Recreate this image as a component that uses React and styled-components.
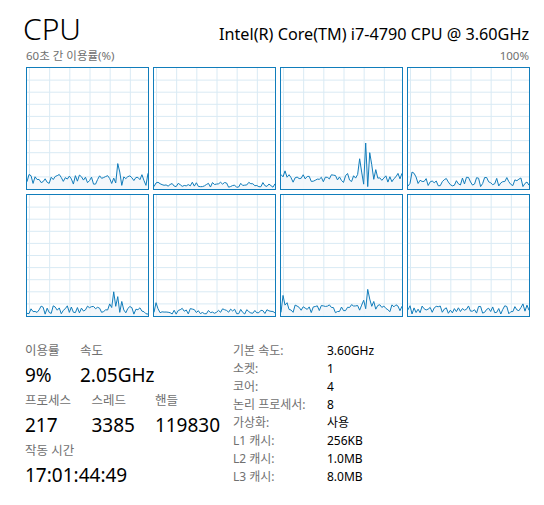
import React from 'react'
import styled, { createGlobalStyle } from 'styled-components'

const GlobalStyle = createGlobalStyle`
  body {
    margin: 0;
    background: #ffffff;
    font-family: "Noto Sans", "Noto Sans CJK KR", sans-serif;
    color: #000000;
  }
`

const Page = styled.div`
  width: 544px;
  height: 505px;
  box-sizing: border-box;
  padding: 12px 15px 0 26px;
  display: flex;
  flex-direction: column;
`

const Header = styled.div`
  display: flex;
  justify-content: space-between;
  align-items: flex-end;
  height: 34px;
`

const Title = styled.div`
  font-size: 30px;
  font-weight: 300;
  line-height: 34px;
  margin-left: -3px;
`

const Model = styled.div`
  font-size: 16.2px;
  line-height: 20px;
  margin-bottom: 2px;
`

const Caption = styled.div`
  display: flex;
  justify-content: space-between;
  font-size: 11.5px;
  line-height: 14px;
  color: #707070;
  margin-top: 3px;
  height: 18px;
`

const GraphGrid = styled.div`
  display: grid;
  grid-template-columns: repeat(4, 123px);
  grid-template-rows: repeat(2, 123px);
  gap: 4px;
`

const GraphBox = styled.div`
  box-sizing: border-box;
  border: 1px solid #117dbb;
  background: #ffffff;
  overflow: hidden;
  svg {
    display: block;
  }
`

const Stats = styled.div`
  display: flex;
  margin-top: 25px;
  margin-left: -1px;
`

const LeftStats = styled.div`
  display: flex;
  flex-direction: column;
  width: 208px;
  padding-top: 1px;
`

const StatRow = styled.div`
  display: flex;
  margin-bottom: 3px;
`

const Stat = styled.div`
  width: ${p => p.w}px;
  display: flex;
  flex-direction: column;
`

const Label = styled.div`
  font-size: 12.5px;
  line-height: 16px;
  color: #707070;
  white-space: nowrap;
`

const Value = styled.div`
  font-size: 19px;
  line-height: 30px;
  margin-top: 1px;
  white-space: nowrap;
`

const Specs = styled.div`
  display: grid;
  grid-template-columns: 94px auto;
  grid-auto-rows: 18px;
  font-size: 12px;
  line-height: 18px;
`

const SpecLabel = styled.div`
  color: #707070;
  white-space: nowrap;
`

const SpecValue = styled.div`
  color: #000000;
`

function rng(seed) {
  let s = seed
  return () => {
    s |= 0
    s = (s + 0x6d2b79f5) | 0
    let t = Math.imul(s ^ (s >>> 15), 1 | s)
    t = (t + Math.imul(t ^ (t >>> 7), 61 | t)) ^ t
    return ((t ^ (t >>> 14)) >>> 0) / 4294967296
  }
}

function makeData(seed, base, noise, spikes) {
  const r = rng(seed)
  const pts = []
  for (let i = 0; i <= 60; i++) {
    let v = base + (r() - 0.5) * 2 * noise
    if (spikes[i] !== undefined) v = spikes[i]
    pts.push(Math.max(0.5, v))
  }
  return pts
}

const graphs = [
  makeData(3, 8, 4, { 0: 6, 1: 12, 2: 11, 16: 12, 40: 11, 43: 9, 44: 5, 45: 21, 46: 14, 47: 3, 48: 10, 58: 7, 59: 3, 60: 13 }),
  makeData(7, 3.5, 2.2, { 0: 2, 1: 5 }),
  makeData(11, 9, 4, { 0: 12, 1: 10, 2: 15, 37: 9, 38: 12, 39: 25, 40: 14, 41: 4, 42: 38, 43: 2, 44: 30, 45: 20, 46: 8, 47: 16, 55: 6, 60: 13 }),
  makeData(19, 6, 4, { 2: 14, 3: 13 }),
  makeData(23, 5, 3.5, { 40: 5, 41: 10, 42: 7, 43: 20, 44: 8, 45: 16, 46: 3, 47: 12, 48: 5 }),
  makeData(29, 4, 2.5, { 0: 3, 1: 11, 2: 6 }),
  makeData(31, 6, 3.5, { 0: 3, 1: 17, 2: 9, 3: 11, 40: 9, 41: 13, 42: 6, 43: 22, 44: 14, 45: 8, 46: 12 }),
  makeData(37, 5, 3.5, { 57: 10, 58: 4, 59: 9 }),
]

const W = 121
const H = 121

function Graph({ data }) {
  const step = W / 60
  const line = data.map((v, i) => `${(i * step).toFixed(2)},${(H - (v / 100) * H).toFixed(2)}`).join(' ')
  const area = `0,${H} ${line} ${W},${H}`
  const vLines = []
  for (let x = 2.5; x < W; x += W / 6) vLines.push(x)
  const hLines = []
  for (let k = 1; k < 10; k++) hLines.push((k * H) / 10)
  return (
    <GraphBox>
      <svg width={W} height={H} viewBox={`0 0 ${W} ${H}`}>
        {vLines.map(x => (
          <line key={'v' + x} x1={x} x2={x} y1={0} y2={H} stroke="#d9eaf4" strokeWidth="1" />
        ))}
        {hLines.map(y => (
          <line key={'h' + y} x1={0} x2={W} y1={y} y2={y} stroke="#d9eaf4" strokeWidth="1" />
        ))}
        <polygon points={area} fill="#f1f6fa" fillOpacity="0.85" />
        <polyline points={line} fill="none" stroke="#117dbb" strokeWidth="1" strokeLinejoin="round" />
      </svg>
    </GraphBox>
  )
}

const specs = [
  ['기본 속도:', '3.60GHz'],
  ['소켓:', '1'],
  ['코어:', '4'],
  ['논리 프로세서:', '8'],
  ['가상화:', '사용'],
  ['L1 캐시:', '256KB'],
  ['L2 캐시:', '1.0MB'],
  ['L3 캐시:', '8.0MB'],
]

export default function App() {
  return (
    <Page>
      <GlobalStyle />
      <Header>
        <Title>CPU</Title>
        <Model>Intel(R) Core(TM) i7-4790 CPU @ 3.60GHz</Model>
      </Header>
      <Caption>
        <span>60초 간 이용률(%)</span>
        <span>100%</span>
      </Caption>
      <GraphGrid>
        {graphs.map((d, i) => (
          <Graph key={i} data={d} />
        ))}
      </GraphGrid>
      <Stats>
        <LeftStats>
          <StatRow>
            <Stat w={55}>
              <Label>이용률</Label>
              <Value>9%</Value>
            </Stat>
            <Stat w={100}>
              <Label>속도</Label>
              <Value>2.05GHz</Value>
            </Stat>
          </StatRow>
          <StatRow>
            <Stat w={68}>
              <Label>프로세스</Label>
              <Value>217</Value>
            </Stat>
            <Stat w={65}>
              <Label>스레드</Label>
              <Value>3385</Value>
            </Stat>
            <Stat w={80}>
              <Label>핸들</Label>
              <Value>119830</Value>
            </Stat>
          </StatRow>
          <StatRow>
            <Stat w={150}>
              <Label>작동 시간</Label>
              <Value>17:01:44:49</Value>
            </Stat>
          </StatRow>
        </LeftStats>
        <Specs>
          {specs.map(([k, v]) => (
            <React.Fragment key={k}>
              <SpecLabel>{k}</SpecLabel>
              <SpecValue>{v}</SpecValue>
            </React.Fragment>
          ))}
        </Specs>
      </Stats>
    </Page>
  )
}
